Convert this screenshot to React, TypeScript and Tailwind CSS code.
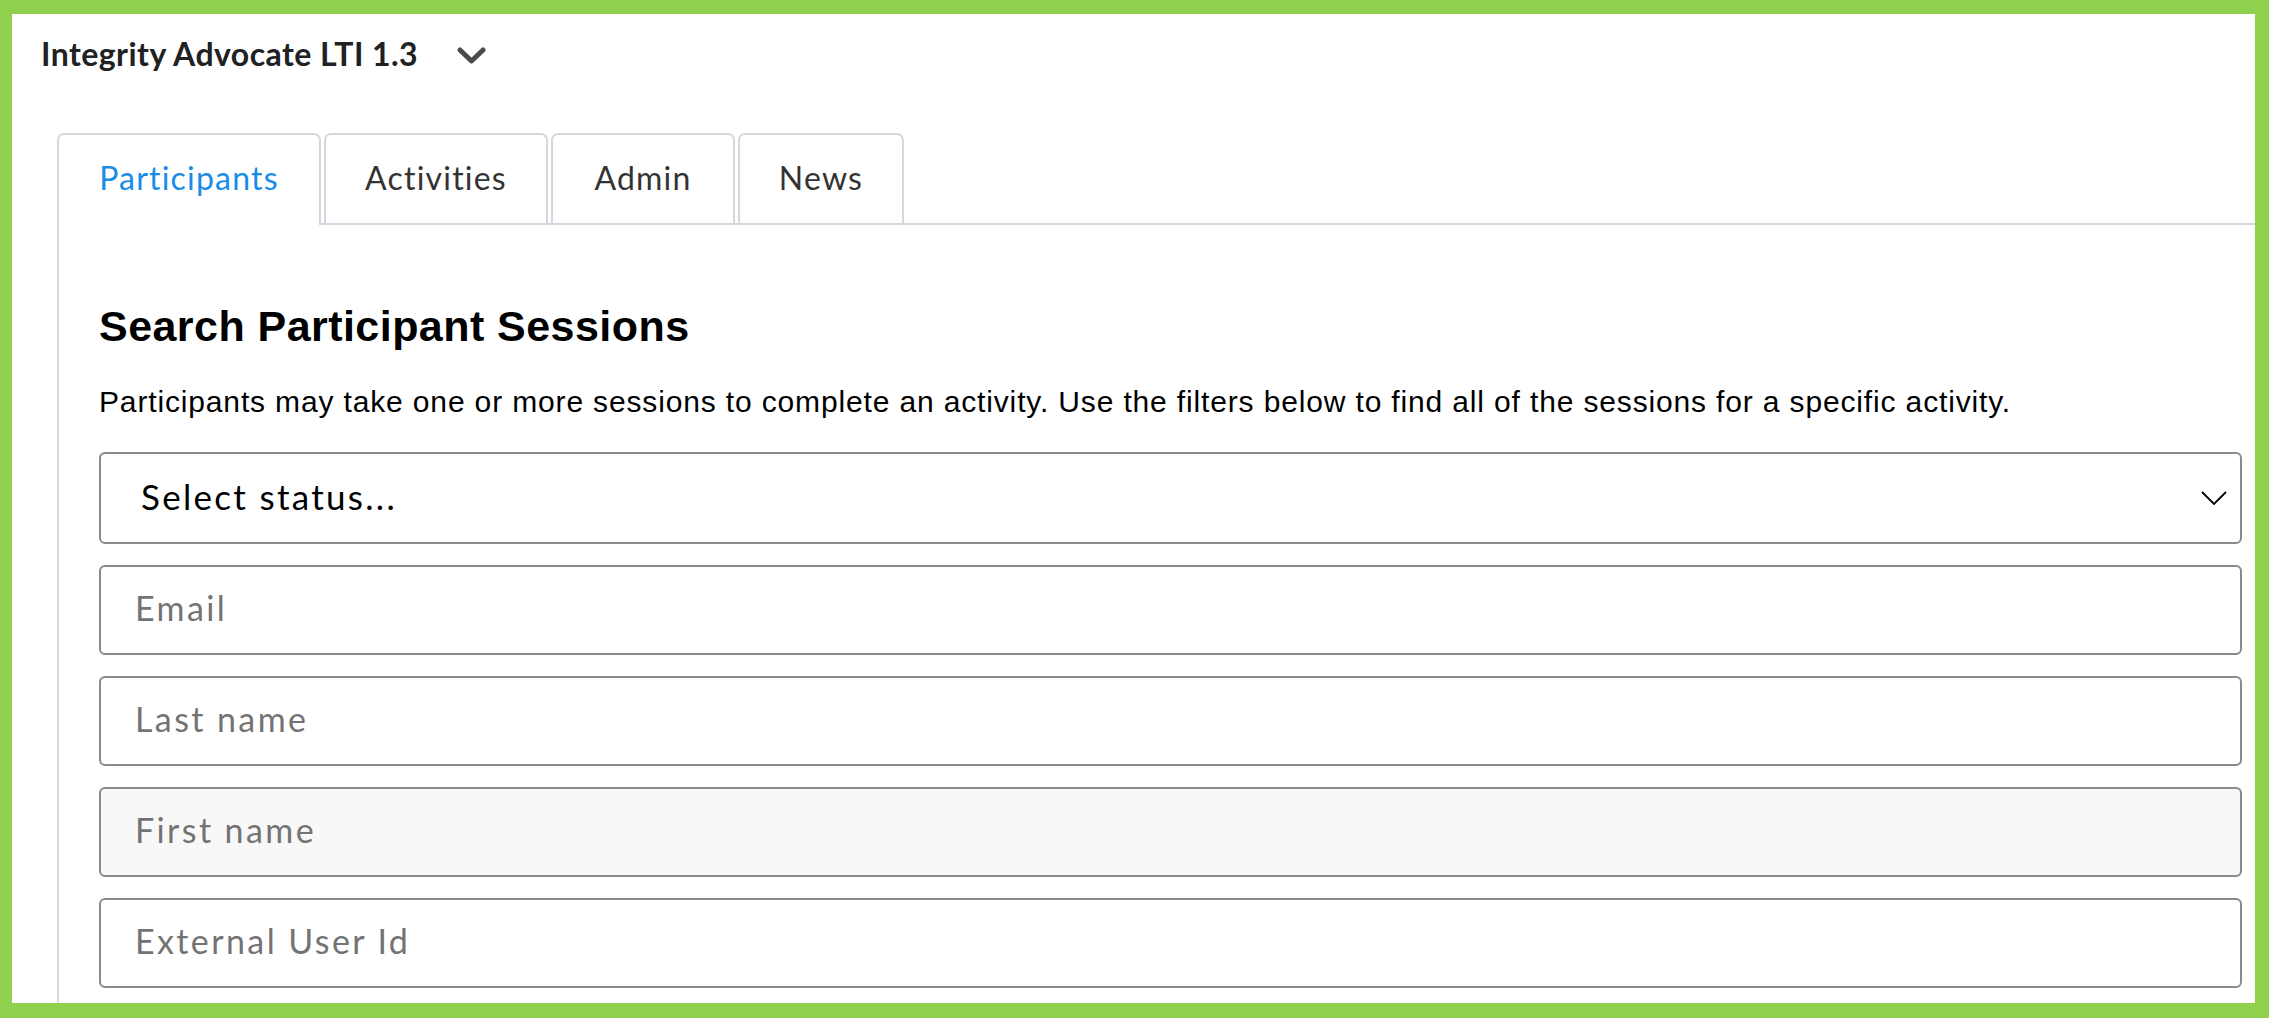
import React from "react";

const lato = { fontFamily: "Lato, 'Noto Sans', sans-serif" };
const arial = { fontFamily: "'Liberation Sans', Arial, sans-serif" };

function Tab({ label, width, active }: { label: string; width: string; active?: boolean }) {
  return (
    <div
      className={
        (active
          ? "relative -mb-[2px] h-[92px] text-[#1a8ce6] "
          : "h-[90px] text-[#333333] ") +
        width +
        " bg-white border-2 border-b-0 border-[#d3d9de] rounded-t-[7px] flex items-center justify-center text-[32px] tracking-[1.2px] [font-variant-ligatures:none]"
      }
      style={lato}
    >
      <span className={active ? "-mt-[4px]" : "-mt-[2px]"}>{label}</span>
    </div>
  );
}

function Field({ placeholder, muted }: { placeholder: string; muted?: boolean }) {
  return (
    <input
      readOnly
      placeholder={placeholder}
      className={
        (muted ? "bg-[#f8f8f8] " : "bg-white ") +
        "block w-full h-[90px] border-2 border-[#8a8a8a] rounded-[6px] pl-[34px] pb-[5px] text-[34px] tracking-[2.4px] text-black placeholder:text-[#737373] outline-none [font-variant-ligatures:none]"
      }
      style={lato}
    />
  );
}

export default function App() {
  return (
    <div className="w-[2269px] h-[1018px] overflow-hidden bg-white border-solid border-[#8fd14f] border-t-[14px] border-l-[12px] border-r-[14px] border-b-[15px] flex flex-col">
      <header className="h-[80px] shrink-0 flex items-center pl-[29px] gap-[39px]" style={lato}>
        <span className="text-[32px] font-bold text-[#202122] leading-none tracking-[0.45px]">Integrity Advocate LTI 1.3</span>
        <svg width="29" height="17" viewBox="0 0 29 17" className="mt-[2px]">
          <path d="M3 3 L14.5 14 L26 3" fill="none" stroke="#494c4e" strokeWidth="5" strokeLinecap="round" strokeLinejoin="round" />
        </svg>
      </header>

      <div className="mt-[39px] ml-[45px] flex-1 flex flex-col min-h-0">
        <div className="flex items-end gap-[3px] border-b-2 border-[#d3d9de] shrink-0">
          <Tab label="Participants" width="w-[264px]" active />
          <Tab label="Activities" width="w-[224px]" />
          <Tab label="Admin" width="w-[184px]" />
          <Tab label="News" width="w-[166px]" />
        </div>

        <div className="flex-1 border-l-2 border-[#d3d9de] pl-[40px] pr-[13px] pt-[75px]">
          <h1 className="text-[43px] leading-[52px] font-bold text-black tracking-[0.45px]" style={arial}>
            Search Participant Sessions
          </h1>
          <p className="mt-[32px] text-[30px] leading-[35px] text-black tracking-[0.85px]" style={arial}>
            Participants may take one or more sessions to complete an activity. Use the filters below to find all of the sessions for a specific activity.
          </p>

          <div className="mt-[33px] flex flex-col gap-[21px]">
            <div className="h-[92px] border-2 border-[#8a8a8a] rounded-[6px] bg-white pl-[40px] pr-[13px] flex items-center justify-between" style={lato}>
              <span className="text-[35px] tracking-[2.3px] text-black -mt-[4px]">Select status...</span>
              <svg width="26" height="14" viewBox="0 0 26 14">
                <path d="M1 1 L13 13 L25 1" fill="none" stroke="#000" strokeWidth="1.8" />
              </svg>
            </div>
            <Field placeholder="Email" />
            <Field placeholder="Last name" />
            <Field placeholder="First name" muted />
            <Field placeholder="External User Id" />
          </div>
        </div>
      </div>
    </div>
  );
}
